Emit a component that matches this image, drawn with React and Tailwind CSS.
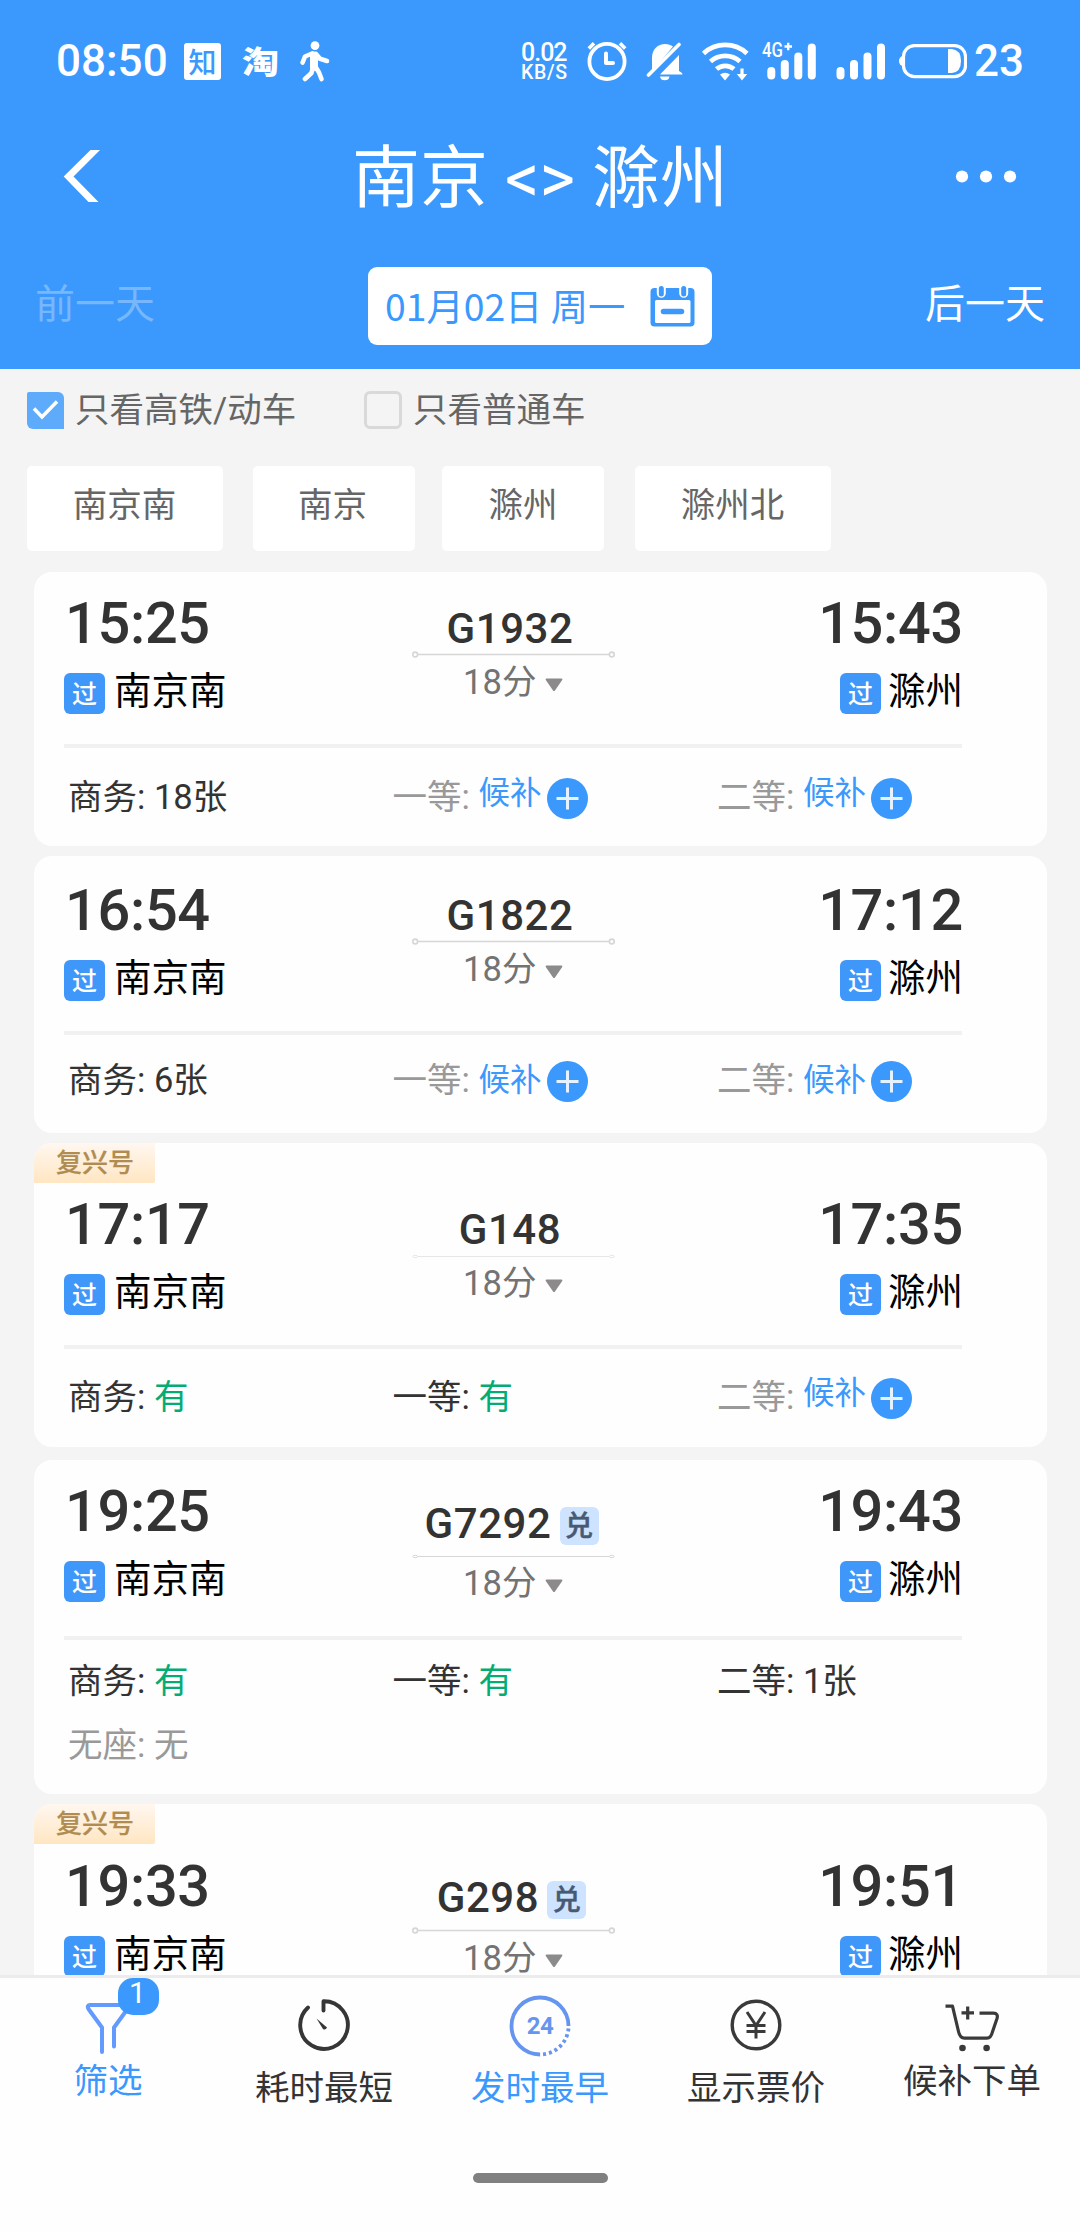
import React from "react";

const CJK = "font-['Noto_Sans_CJK_SC',sans-serif]";

function StatusBar() {
  return (
    <div className="flex h-[88px] items-start pl-[56px] text-white">
      <span className="mt-[35px] w-[111px] text-[44px] font-medium leading-[52px]">08:50</span>
      <span className={`ml-[17px] mt-[43px] flex h-[37px] w-[37px] items-center justify-center rounded-[3px] bg-white pb-[2px] text-[28px] font-medium leading-none text-[#3b98fc] ${CJK}`}>
        知
      </span>
      <span className={`ml-[21px] mt-[41px] w-[38px] scale-y-[0.84] text-[37px] font-black leading-[37px] ${CJK}`}>
        淘
      </span>
      <svg className="ml-[20px] mt-[41px]" width="30" height="41" viewBox="0 0 30 41" fill="none" stroke="white" strokeWidth="4.6" strokeLinecap="round" strokeLinejoin="round">
        <circle cx="15" cy="4.6" r="4.4" fill="white" stroke="none" />
        <path d="M2.6 21.5 5 15.5 12 12.5" />
        <path d="M16 13 20 17.8 27 20" />
        <path d="M14 14.5V26" strokeWidth="8" />
        <path d="M13 26 11.5 32 5 38" />
        <path d="M15 25 19 31.5 21.5 38" />
      </svg>
      <div className="ml-[190px] mt-[41px] w-[49px] pl-px text-[19.500px] font-medium leading-[17px] tracking-[0.7px] first-line:text-[25px] first-line:leading-[23px] first-line:tracking-[-1px]">
        0.02
        <br />
        KB/S
      </div>
      <svg className="ml-[18px] mt-[41px]" width="40" height="40" viewBox="0 0 40 40" fill="none" stroke="white">
        <circle cx="20" cy="20.5" r="17.6" strokeWidth="3.8" />
        <path d="M19 12.5V22h7" strokeWidth="4" strokeLinecap="round" strokeLinejoin="round" />
        <path d="M1.8 7.5 7 2.3M38.2 7.5 33 2.3" strokeWidth="3.6" />
      </svg>
      <svg className="ml-[19px] mt-[41px]" width="38" height="40" viewBox="0 0 38 40">
        <path d="M6 29V17C6 8 12 3 19 3c3.500 0 6 1 8 2.500L8 28ZM33 14v16c1.500 1 3.500 1.500 3.500 3.500H14Z" fill="white" />
        <path d="M2.500 34 33 3.500" stroke="white" strokeWidth="3.600" strokeLinecap="round" />
        <path d="M14 35.500h9.500a4.800 4.500 0 0 1-9.500 0Z" fill="white" />
      </svg>
      <svg className="ml-[17px] mt-[41px]" width="50" height="40" viewBox="0 0 50 40" fill="none" stroke="white" strokeWidth="4.800">
        <path d="M2.500 12.500a32 32 0 0 1 43.500 0" />
        <path d="M9.500 20.500a22 22 0 0 1 29.500 0" />
        <path d="M15.500 28a13.500 13.500 0 0 1 17.500 0" />
        <path d="M19 33.500q5-3.500 10 0l-5 6Z" fill="white" stroke="none" />
        <path d="M41 27.500V35" strokeWidth="3.200" />
        <path d="M35.800 33h10.400L41 39.500Z" fill="white" stroke="none" />
      </svg>
      <div className="relative ml-[11px] mt-[41px] h-[40px] w-[56px]">
        <span className="absolute left-0 top-[1px] origin-left scale-x-[0.84] text-[20px] font-medium leading-[17px]">4G</span>
        <svg width="56" height="40" viewBox="0 0 56 40" fill="none" stroke="white">
          <path d="M22.500 5.500h7.500M26.200 1.800v7.500" strokeWidth="2.400" />
          <path d="M9.300 30v4.500M22.800 23v11.500M36.300 15.500v19M49.800 6.500v28" strokeWidth="8" strokeLinecap="round" />
        </svg>
      </div>
      <svg className="ml-[18px] mt-[41px]" width="50" height="40" viewBox="0 0 50 40" fill="none" stroke="white" strokeWidth="8" strokeLinecap="round">
        <path d="M4.500 30v4.500M18 23v11.500M31.500 15.500v19M45 6.500v28" />
      </svg>
      <svg className="ml-[13px] mt-[43px]" width="68" height="36" viewBox="0 0 68 36">
        <rect x="4.500" y="2.700" width="62" height="31" rx="11" fill="none" stroke="white" strokeWidth="3.200" />
        <path d="M4 12.500v11Q0 22 0 18t4-5.500Z" fill="white" />
        <path d="M49 6h4q9 1 9 12t-9 12h-4Z" fill="white" />
      </svg>
      <span className="ml-[7px] mt-[35px] text-[44px] font-medium leading-[52px]">23</span>
    </div>
  );
}

function CalendarIcon() {
  return (
    <svg className="ml-[25px] shrink-0" width="45" height="41" viewBox="0 0 45 41">
      <rect x="0.500" y="2" width="44" height="38.500" rx="4" fill="#3b98fc" />
      <rect x="5" y="14" width="35.500" height="23" rx="1.500" fill="white" />
      <path d="M11.300 2v5.300M33.700 2v5.300" stroke="white" strokeWidth="9" strokeLinecap="round" />
      <path d="M11.300 2.500v5.500M33.700 2.500v5.500" stroke="#3b98fc" strokeWidth="5" strokeLinecap="round" />
      <path d="M13.500 25.500h18" stroke="#3b98fc" strokeWidth="5.500" strokeLinecap="round" />
    </svg>
  );
}

function Header() {
  return (
    <header className="h-[369px] shrink-0 bg-[#3b98fc]">
      <StatusBar />
      <div className="flex h-[176px] items-center justify-between pl-[63px] pr-[63px] text-white">
        <svg width="62" height="54" viewBox="0 0 62 54" fill="white">
          <path d="M0.700 27.500 27.500 1H37L10.500 27.500 35.500 53H25.500Z" />
        </svg>
        <h1 className="mt-[6px] whitespace-pre text-[68px] leading-[80px]">{"南京 <> 滁州"}</h1>
        <svg width="62" height="14" viewBox="0 0 62 14" fill="white">
          <circle cx="7" cy="7.500" r="6.100" />
          <circle cx="31" cy="7.500" r="6.100" />
          <circle cx="55" cy="7.500" r="6.100" />
        </svg>
      </div>
      <div className="flex items-center justify-between px-[35px] pt-[3px] text-[40px] text-white">
        <span className="mb-[3px] text-[#76b7fd]">前一天</span>
        <div className={`flex h-[78px] w-[344px] items-center rounded-[9px] bg-white pl-[17px] text-[37.300px] text-[#3b98fc] ${CJK}`}>
          <span className="mb-[2px] whitespace-pre leading-[50px]">01月02日 周一</span>
          <CalendarIcon />
        </div>
        <span className="mb-[3px]">后一天</span>
      </div>
    </header>
  );
}

function Filters() {
  return (
    <section className="shrink-0 text-[34.5px] text-[#666]">
      <div className="flex h-[84px] items-center pl-[27px]">
        <span className="mb-[2px] flex h-[37px] w-[37px] items-center justify-center rounded-bl-[6px] rounded-tl-[2px] rounded-tr-[6px] bg-[#5eaafb]">
          <svg width="27" height="22" viewBox="0 0 27 22" fill="none" stroke="white" strokeWidth="3.500">
            <path d="M2 9.500 10 18 25 2.500" />
          </svg>
        </span>
        <span className="mb-[2px] ml-[11px] w-[289px] leading-[44px]">只看高铁/动车</span>
        <span className="mb-[2px] h-[38px] w-[38px] rounded-[6px] border-[3px] border-[#d9d9d9]" />
        <span className="mb-[2px] ml-[11px] leading-[44px]">只看普通车</span>
      </div>
      <div className="mt-[13px] flex pl-[27px] leading-[79px]">
        <button className="mr-[30px] h-[84.500px] w-[196px] rounded-[5px] bg-white pb-[5px] pr-[1px] leading-[79px]">南京南</button>
        <button className="mr-[27px] h-[84.500px] w-[162px] rounded-[5px] bg-white pb-[5px] pr-[3px] leading-[79px]">南京</button>
        <button className="mr-[31px] h-[84.500px] w-[162px] rounded-[5px] bg-white pb-[5px] leading-[79px]">滁州</button>
        <button className="h-[84.500px] w-[196px] rounded-[5px] bg-white pb-[5px] pr-[1px] leading-[79px]">滁州北</button>
      </div>
    </section>
  );
}

function Station({ name, gap }) {
  return (
    <div className={`mt-[16px] flex items-start ${gap}`}>
      <span className="h-[41px] w-[41px] rounded-[6px] bg-[#4097fa] text-center text-[25px] font-medium leading-[43px] text-white">过</span>
      <span className="text-[37.500px] leading-[37px] text-black">{name}</span>
    </div>
  );
}

function Seat({ seat, low }) {
  const [label, value] = seat;
  const wait = value === "候补";
  const tone = wait || value === "无" ? "text-[#999]" : "text-[#333]";
  return (
    <div className={`flex h-[64px] items-start whitespace-pre text-[34.5px] leading-[64px] ${tone}`}>
      <span>{label}: </span>
      {wait ? (
        <>
          <span className={`text-[31.500px] text-[#3b98fc] ${low ? "leading-[66px]" : "leading-[58px]"}`}>候补</span>
          <svg className="ml-[5.500px] mt-[13px]" width="41" height="41" viewBox="0 0 41 41">
            <circle cx="20.500" cy="20.500" r="20.500" fill="#3b98fc" />
            <path d="M9.500 20.500h22M20.500 9.500v22" stroke="#e6f2ff" strokeWidth="3" />
          </svg>
        </>
      ) : (
        <span className={value === "有" ? "text-[#04ac74]" : ""}>{value}</span>
      )}
    </div>
  );
}

function RouteLine({ thin, faint }) {
  const color = faint ? "#e6e6e6" : "#d6d6d6";
  const ry = thin ? 1.2 : 2.4;
  const w = thin ? 1 : 1.6;
  return (
    <svg className="block" width="203" height="8" viewBox="0 0 203 8" fill="none" stroke={color} strokeWidth={w}>
      <path d="M5.500 4.500h192" />
      <ellipse cx="3.200" cy="4.500" rx="2.400" ry={ry} />
      <ellipse cx="199.800" cy="4.500" rx="2.400" ry={ry} />
    </svg>
  );
}

const trains = [
  {
    no: "G1932", from: "15:25", to: "15:43", box: "h-[274px]", pad: "pt-[17px]", mid: "pt-[18px]", dur: "mt-[4px]", rule: "mt-[30px]", seatPad: "pt-[17px]",
    seats: [["商务", "18张"], ["一等", "候补"], ["二等", "候补"]],
  },
  {
    no: "G1822", from: "16:54", to: "17:12", box: "mt-[10px] h-[277px]", pad: "pt-[20px]", mid: "pt-[18px]", dur: "mt-[4px]", rule: "mt-[30px]", seatPad: "pt-[13px]", low: true,
    seats: [["商务", "6张"], ["一等", "候补"], ["二等", "候补"]],
  },
  {
    no: "G148", from: "17:17", to: "17:35", box: "mt-[10px] h-[304px]", pad: "pt-[7px]", mid: "pt-[18px]", line: "mt-px", dur: "mt-[3px]", rule: "mt-[30px]", seatPad: "pt-[16px]", fuxing: true, thin: true, faint: true,
    seats: [["商务", "有"], ["一等", "有"], ["二等", "候补"]],
  },
  {
    no: "G7292", from: "19:25", to: "19:43", box: "mt-[13px] h-[334px]", pad: "pt-[17px]", mid: "pt-[25px]", line: "mt-[7px]", dur: "mt-[3px]", rule: "mt-[33px]", seatPad: "pt-[9px]", points: true, thin: true,
    seats: [["商务", "有"], ["一等", "有"], ["二等", "1张"], ["无座", "无"]],
  },
  {
    no: "G298", from: "19:33", to: "19:51", box: "mt-[10px] h-[304px]", pad: "pt-[8px]", mid: "pt-[24px]", line: "mt-[7px]", dur: "mt-[4px]", rule: "mt-[30px]", seatPad: "pt-[16px]", fuxing: true, points: true,
    seats: [],
  },
];

function TrainCard({ t }) {
  return (
    <article className={`w-[1012.500px] shrink-0 overflow-hidden rounded-[18px] bg-[#fefefe] ${t.box}`}>
      {t.fuxing && (
        <div className="h-[40px] w-[121px] rounded-br-[2px] bg-linear-to-b from-[#fff7f0] to-[#ffe6c2] pl-[22px] text-[26px] font-medium leading-[41px] text-[#b08c50] [-webkit-text-stroke:0.2px]">
          复兴号
        </div>
      )}
      <div className={`ml-[30px] w-[899px] ${t.pad}`}>
        <div className="grid grid-cols-[1fr_203px_1fr]">
          <div>
            <div className="pl-px text-[57.700px] font-medium leading-[68px] tracking-[-0.3px] text-[#333]">{t.from}</div>
            <Station name="南京南" gap="gap-[9px]" />
          </div>
          <div className={`flex flex-col items-center ${t.mid}`}>
            <div className="mr-[7px] flex items-start">
              <span className="text-[42px] font-medium leading-[43px] tracking-[0.6px] text-[#333]">{t.no}</span>
              {t.points && (
                <span className="-mr-[3px] ml-[8px] mt-[5px] h-[38px] w-[39px] rounded-[6px] bg-[#cde3ff] text-center text-[28px] font-medium leading-[40px] text-[#475a74] [-webkit-text-stroke:0.5px]">兑</span>
              )}
            </div>
            <div className={t.line}>
              <RouteLine thin={t.thin} faint={t.faint} />
            </div>
            <div className={`mr-px flex h-[40px] items-center ${t.dur}`}>
              <span className="text-[34.5px] leading-[40px] text-[#737373]">18分</span>
              <svg className="ml-[8.500px] mt-[6px]" width="18" height="14" viewBox="0 0 18 14">
                <path d="M1.500 0.500h15q1.500 0 .7 1.500L10 12.500q-1 1.200-2 0L.8 2Q0 .5 1.500.5Z" fill="#8c8a8a" />
              </svg>
            </div>
          </div>
          <div className="flex flex-col items-end">
            <div className="text-[57.700px] font-medium leading-[68px] tracking-[-0.3px] text-[#333]">{t.to}</div>
            <Station name="滁州" gap="gap-[7px]" />
          </div>
        </div>
        <div className={`h-[4px] w-[898px] bg-[#f1f1f1] ${t.rule}`} />
        <div className={`grid grid-cols-[324.500px_324.500px_1fr] pl-[4px] ${t.seatPad}`}>
          {t.seats.map((s) => (
            <Seat key={s[0]} seat={s} low={t.low} />
          ))}
        </div>
      </div>
    </article>
  );
}

const FilterIcon = () => (
  <svg width="48" height="54" viewBox="0 0 48 54" fill="none" stroke="#639afe" strokeWidth="4" strokeLinecap="round" strokeLinejoin="round">
    <path d="M18 50V25.500L4.500 7Q2.500 3.500 6 3H42q3.500.5 1.500 4L30 25.500V44.500" />
  </svg>
);

const TimerIcon = () => (
  <svg width="54" height="54" viewBox="0 0 54 54" fill="none" stroke="#363636" strokeWidth="3.900" strokeLinecap="round" strokeLinejoin="round">
    <path d="M26.500 12.500V3.300A23.800 23.800 0 1 1 11 9.500" />
    <path d="M19.500 20.500 26 31q2.500 1.500 4-1.500Z" fill="#363636" stroke="none" />
  </svg>
);

const ClockIcon = () => (
  <div className="relative flex h-[62px] w-[62px] items-center justify-center">
    <svg className="absolute inset-0" width="62" height="62" viewBox="0 0 62 62" fill="none" stroke="#6595ee" strokeWidth="3.800">
      <path d="M31 59.500A28.500 28.500 0 1 1 59.500 31" />
      <path d="M59.500 33.500A28.500 28.500 0 0 1 31 59.500" strokeDasharray="3 3" />
    </svg>
    <span className="relative text-[24px] font-bold leading-none tracking-[-0.4px] text-[#6595ee]">24</span>
  </div>
);

const YuanIcon = () => (
  <svg width="54" height="54" viewBox="0 0 54 54" fill="none" stroke="#3a3a3a" strokeWidth="3.400">
    <circle cx="27" cy="27" r="23.800" />
    <path d="M18 14 27 27.500 36 14M27 27.500V40.500M17.500 27.500h19M17.500 33.500h19" strokeWidth="3" />
  </svg>
);

const CartIcon = () => (
  <svg width="56" height="50" viewBox="0 0 56 50" fill="none" stroke="#3a3a3a" strokeWidth="3.200" strokeLinejoin="round">
    <path d="M1.500 3.200H8.500L14.500 28.500q1.500 6.700 6 6.700H43q4 0 5.500-6.500L53 15.500q1.500-5.300-3.500-5.300H35.500" />
    <path d="M17.500 9.800H30M23.700 3.500v13" />
    <g fill="#3a3a3a" stroke="none">
      <circle cx="18.500" cy="45" r="3.300" />
      <circle cx="42.600" cy="45" r="3.300" />
    </g>
  </svg>
);

const tabs = [
  { label: "筛选", icon: <FilterIcon />, area: "h-[83px] pt-[24px]", tone: "text-[#3b98fc]", badge: "1" },
  { label: "耗时最短", icon: <TimerIcon />, area: "h-[90px] pt-[20px]", tone: "text-[#333]" },
  { label: "发时最早", icon: <ClockIcon />, area: "h-[90px] pt-[17px]", tone: "text-[#3b98fc]" },
  { label: "显示票价", icon: <YuanIcon />, area: "h-[90px] pt-[20px]", tone: "text-[#333]" },
  { label: "候补下单", icon: <CartIcon />, area: "h-[83px] pt-[25px]", tone: "text-[#333]" },
];

function BottomNav() {
  return (
    <nav className="flex h-[257px] shrink-0 flex-col border-t-[3px] border-[#ececec] bg-[#fefefe]">
      <div className="grid h-[195px] grid-cols-5">
        {tabs.map((t) => (
          <div key={t.label} className={`relative flex flex-col items-center text-[34.5px] leading-[40px] ${t.tone}`}>
            <div className={t.area}>{t.icon}</div>
            {t.badge && (
              <span className="absolute left-[118px] top-0 h-[37px] w-[41px] rounded-[15px] bg-[#3b98fc] pr-[2px] text-center text-[30px] leading-[29px] text-white">{t.badge}</span>
            )}
            <span>{t.label}</span>
          </div>
        ))}
      </div>
      <div className="mx-auto h-[10px] w-[135px] rounded-full bg-[#808080]" />
    </nav>
  );
}

export default function App() {
  return (
    <div lang="zh-CN" className="flex h-[2232px] w-[1080px] flex-col overflow-hidden bg-[#f4f4f4] font-['Roboto','Noto_Sans_CJK_SC',sans-serif]">
      <Header />
      <Filters />
      <main className="mt-[21px] flex min-h-0 flex-1 flex-col overflow-hidden pl-[34px]">
        {trains.map((t) => (
          <TrainCard key={t.no} t={t} />
        ))}
      </main>
      <BottomNav />
    </div>
  );
}
